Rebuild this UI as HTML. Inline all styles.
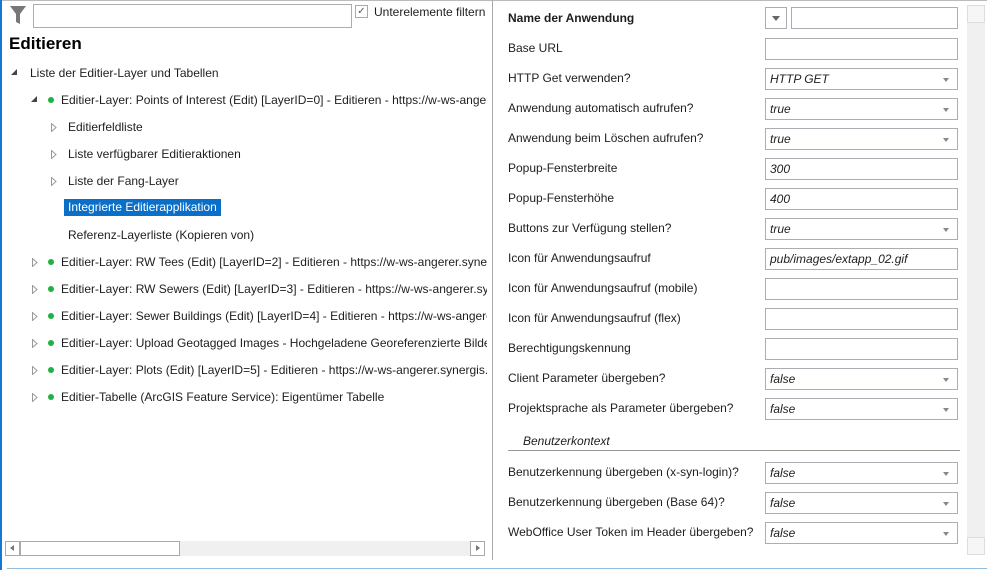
<!DOCTYPE html>
<html><head><meta charset="utf-8"><style>
*{box-sizing:border-box;margin:0;padding:0}
body{width:987px;height:570px;position:relative;background:#fff;font-family:"Liberation Sans",sans-serif;font-size:12px;color:#1e1e1e;overflow:hidden}
.a{position:absolute;white-space:nowrap}
.inp{position:absolute;border:1px solid #abadb3;background:#fff;height:22px;font-style:italic;padding:3px 4px;font-size:12px}
.dd::after{content:"";position:absolute;right:8px;top:9px;border-left:3px solid transparent;border-right:3px solid transparent;border-top:4px solid #888}
.dot{display:inline-block;width:6px;height:6px;border-radius:50%;background:#1fb141;margin-right:7px;vertical-align:1px}
</style></head><body>
<div class="a" style="left:0;top:0;width:987px;height:1px;background:#bbb"></div>
<div class="a" style="left:0;top:0;width:2px;height:570px;background:#1577d6"></div>
<div class="a" style="left:7px;top:568px;width:980px;height:1px;background:#8fbfdc"></div>
<div class="a" style="left:492px;top:0;width:1px;height:560px;background:#aaa"></div>
<svg class="a" style="left:9px;top:5px" width="18" height="20"><path d="M1 1h16l-6 8v10l-4-2V9z" fill="#777"/></svg>
<div class="a" style="left:33px;top:4px;width:319px;height:24px;border:1px solid #abadb3"></div>
<div class="a" style="left:355px;top:5px;width:13px;height:13px;border:1px solid #aaa;font-size:10px;line-height:11px;text-align:center;color:#555">✓</div>
<div class="a" style="left:374px;top:5px">Unterelemente filtern</div>
<div class="a" style="left:9px;top:34px;font-size:17px;font-weight:bold;color:#000">Editieren</div>
<div class="a" style="left:11px;top:69px;border-left:6px solid transparent;border-bottom:6px solid #444;width:0;height:0"></div>
<div class="a" style="left:30px;top:66px">Liste der Editier-Layer und Tabellen</div>
<div class="a" style="left:31px;top:96px;border-left:6px solid transparent;border-bottom:6px solid #444;width:0;height:0"></div>
<div class="a" style="left:48px;top:93px;width:439px;overflow:hidden"><span class="dot"></span>Editier-Layer: Points of Interest (Edit) [LayerID=0] - Editieren - https://w-ws-angerer.</div>
<svg class="a" style="left:51px;top:123px" width="6" height="9"><path d="M.5.5L5 4.5.5 8.5z" fill="none" stroke="#999"/></svg>
<div class="a" style="left:68px;top:120px">Editierfeldliste</div>
<svg class="a" style="left:51px;top:150px" width="6" height="9"><path d="M.5.5L5 4.5.5 8.5z" fill="none" stroke="#999"/></svg>
<div class="a" style="left:68px;top:147px">Liste verfügbarer Editieraktionen</div>
<svg class="a" style="left:51px;top:177px" width="6" height="9"><path d="M.5.5L5 4.5.5 8.5z" fill="none" stroke="#999"/></svg>
<div class="a" style="left:68px;top:174px">Liste der Fang-Layer</div>
<div class="a" style="left:64px;top:199px;background:#0a6fc8;color:#fff;padding:1px 4px 2px 4px">Integrierte Editierapplikation</div>
<div class="a" style="left:68px;top:228px">Referenz-Layerliste (Kopieren von)</div>
<svg class="a" style="left:32px;top:258px" width="6" height="9"><path d="M.5.5L5 4.5.5 8.5z" fill="none" stroke="#999"/></svg>
<div class="a" style="left:48px;top:255px;width:439px;overflow:hidden"><span class="dot"></span>Editier-Layer: RW Tees (Edit) [LayerID=2] - Editieren - https://w-ws-angerer.synergis.intern/arcgis</div>
<svg class="a" style="left:32px;top:285px" width="6" height="9"><path d="M.5.5L5 4.5.5 8.5z" fill="none" stroke="#999"/></svg>
<div class="a" style="left:48px;top:282px;width:439px;overflow:hidden"><span class="dot"></span>Editier-Layer: RW Sewers (Edit) [LayerID=3] - Editieren - https://w-ws-angerer.synergis.intern</div>
<svg class="a" style="left:32px;top:312px" width="6" height="9"><path d="M.5.5L5 4.5.5 8.5z" fill="none" stroke="#999"/></svg>
<div class="a" style="left:48px;top:309px;width:439px;overflow:hidden"><span class="dot"></span>Editier-Layer: Sewer Buildings (Edit) [LayerID=4] - Editieren - https://w-ws-angerer.synergis</div>
<svg class="a" style="left:32px;top:339px" width="6" height="9"><path d="M.5.5L5 4.5.5 8.5z" fill="none" stroke="#999"/></svg>
<div class="a" style="left:48px;top:336px;width:439px;overflow:hidden"><span class="dot"></span>Editier-Layer: Upload Geotagged Images - Hochgeladene Georeferenzierte Bilder - https</div>
<svg class="a" style="left:32px;top:366px" width="6" height="9"><path d="M.5.5L5 4.5.5 8.5z" fill="none" stroke="#999"/></svg>
<div class="a" style="left:48px;top:363px;width:439px;overflow:hidden"><span class="dot"></span>Editier-Layer: Plots (Edit) [LayerID=5] - Editieren - https://w-ws-angerer.synergis.intern</div>
<svg class="a" style="left:32px;top:393px" width="6" height="9"><path d="M.5.5L5 4.5.5 8.5z" fill="none" stroke="#999"/></svg>
<div class="a" style="left:48px;top:390px"><span class="dot"></span>Editier-Tabelle (ArcGIS Feature Service): Eigentümer Tabelle</div>
<div class="a" style="left:5px;top:541px;width:480px;height:15px;background:#f0f0f0"></div>
<div class="a" style="left:5px;top:541px;width:15px;height:15px;border:1px solid #aaa;background:#fff"></div>
<div class="a" style="left:10px;top:545px;border-top:3px solid transparent;border-bottom:3px solid transparent;border-right:4px solid #777;width:0;height:0"></div>
<div class="a" style="left:20px;top:541px;width:160px;height:15px;border:1px solid #aaa;background:#fff"></div>
<div class="a" style="left:470px;top:541px;width:15px;height:15px;border:1px solid #aaa;background:#fff"></div>
<div class="a" style="left:476px;top:545px;border-top:3px solid transparent;border-bottom:3px solid transparent;border-left:4px solid #777;width:0;height:0"></div>
<div class="a" style="left:967px;top:5px;width:18px;height:550px;background:#f0f0f0"></div>
<div class="a" style="left:967px;top:5px;width:18px;height:18px;border:1px solid #ddd;background:#f6f6f6"></div>
<div class="a" style="left:967px;top:537px;width:18px;height:18px;border:1px solid #ddd;background:#f6f6f6"></div>
<div class="a" style="left:508px;top:11px;font-weight:bold">Name der Anwendung</div>
<div class="a" style="left:765px;top:7px;width:22px;height:22px;border:1px solid #abadb3"></div>
<div class="a" style="left:772px;top:16px;border-left:4px solid transparent;border-right:4px solid transparent;border-top:5px solid #666;width:0;height:0"></div>
<div class="inp" style="left:791px;top:7px;width:167px"></div>
<div class="a" style="left:508px;top:41px">Base URL</div><div class="inp" style="left:765px;top:38px;width:193px"></div>
<div class="a" style="left:508px;top:71px">HTTP Get verwenden?</div><div class="inp dd" style="left:765px;top:68px;width:193px">HTTP GET</div>
<div class="a" style="left:508px;top:101px">Anwendung automatisch aufrufen?</div><div class="inp dd" style="left:765px;top:98px;width:193px">true</div>
<div class="a" style="left:508px;top:131px">Anwendung beim Löschen aufrufen?</div><div class="inp dd" style="left:765px;top:128px;width:193px">true</div>
<div class="a" style="left:508px;top:161px">Popup-Fensterbreite</div><div class="inp" style="left:765px;top:158px;width:193px">300</div>
<div class="a" style="left:508px;top:191px">Popup-Fensterhöhe</div><div class="inp" style="left:765px;top:188px;width:193px">400</div>
<div class="a" style="left:508px;top:221px">Buttons zur Verfügung stellen?</div><div class="inp dd" style="left:765px;top:218px;width:193px">true</div>
<div class="a" style="left:508px;top:251px">Icon für Anwendungsaufruf</div><div class="inp" style="left:765px;top:248px;width:193px">pub/images/extapp_02.gif</div>
<div class="a" style="left:508px;top:281px">Icon für Anwendungsaufruf (mobile)</div><div class="inp" style="left:765px;top:278px;width:193px"></div>
<div class="a" style="left:508px;top:311px">Icon für Anwendungsaufruf (flex)</div><div class="inp" style="left:765px;top:308px;width:193px"></div>
<div class="a" style="left:508px;top:341px">Berechtigungskennung</div><div class="inp" style="left:765px;top:338px;width:193px"></div>
<div class="a" style="left:508px;top:371px">Client Parameter übergeben?</div><div class="inp dd" style="left:765px;top:368px;width:193px">false</div>
<div class="a" style="left:508px;top:401px">Projektsprache als Parameter übergeben?</div><div class="inp dd" style="left:765px;top:398px;width:193px">false</div>
<div class="a" style="left:523px;top:434px;font-style:italic">Benutzerkontext</div>
<div class="a" style="left:508px;top:450px;width:452px;height:1px;background:#999"></div>
<div class="a" style="left:508px;top:465px">Benutzerkennung übergeben (x-syn-login)?</div><div class="inp dd" style="left:765px;top:462px;width:193px">false</div>
<div class="a" style="left:508px;top:495px">Benutzerkennung übergeben (Base 64)?</div><div class="inp dd" style="left:765px;top:492px;width:193px">false</div>
<div class="a" style="left:508px;top:525px">WebOffice User Token im Header übergeben?</div><div class="inp dd" style="left:765px;top:522px;width:193px">false</div>
</body></html>
